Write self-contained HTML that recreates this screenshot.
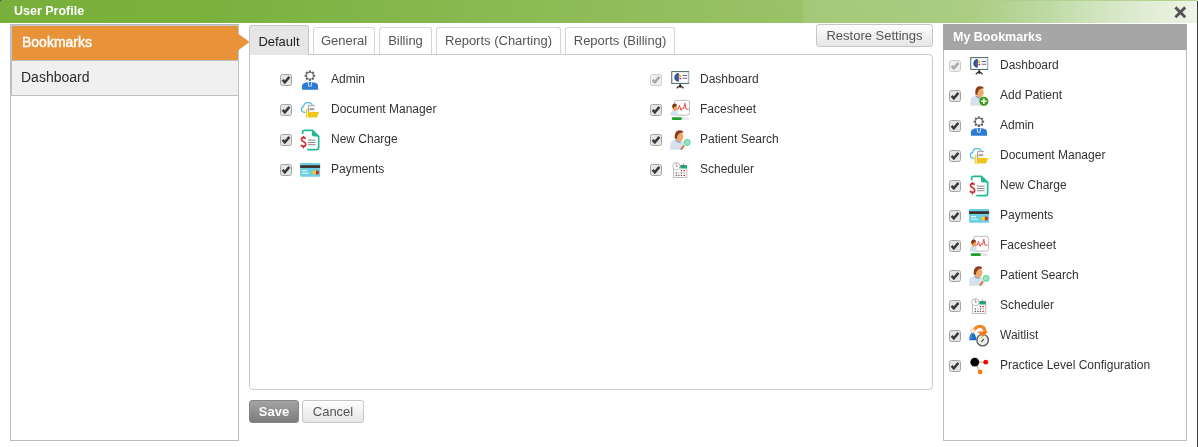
<!DOCTYPE html>
<html><head><meta charset="utf-8">
<style>
*{box-sizing:border-box;margin:0;padding:0}
html,body{width:1198px;height:447px;overflow:hidden;background:#fff;font-family:"Liberation Sans",sans-serif;color:#333}
.a{position:absolute}
#hdr{left:0;top:0;width:1197px;height:23px;background:linear-gradient(to right,#79b03b 0%,#7ab13d 17%,#9ac268 67.05%,#a2c978 67.05%,#aacd82 81%,#bcd9a0 87%,#d2e5c0 92%,#eef5e8 100%)}
#title{left:14px;top:4px;font-size:12.5px;font-weight:bold;color:#fff;line-height:14px}
#edge{left:1197px;top:1px;width:1px;height:446px;background:#3c3c3c}
#lp{left:10px;top:24px;width:229px;height:417px;border:1px solid #b8bcc0}
#bm{left:11px;top:25px;width:228px;height:36px;border:1px solid #c2c8ce;background:#e8923a;color:#fff;font-size:14px;font-weight:normal;-webkit-text-stroke:0.4px #fff;padding:8px 0 0 10px}
#dbi{left:11px;top:60px;width:228px;height:36px;background:#f0f0f0;border:1px solid #c0c0c0;font-size:14px;color:#2a2a2a;padding:8px 0 0 9px}
.tab{top:27px;height:27px;border:1px solid #d6d6d6;border-bottom:none;border-radius:3px 3px 0 0;background:#fff;font-size:13px;color:#555;text-align:center;padding-top:5px}
.tab.on{top:25px;height:30px;background:#e6e6e6;color:#222;border-color:#c8c8c8;padding-top:8px}
#box{left:249px;top:54px;width:684px;height:336px;border:1px solid #c8cccc;border-radius:0 4px 4px 4px}
.btn{border:1px solid #c6c6c6;border-radius:3px;background:linear-gradient(#fdfdfd,#e6e6e6);font-size:13px;color:#555;text-align:center}
.cb{width:12px;height:12px}
.it{font-size:12px;color:#333;line-height:14px;white-space:nowrap}
#rp{left:943px;top:24px;width:244px;height:417px;border:1px solid #b8bec2}
#rph{left:943px;top:24px;width:244px;height:26px;background:#a6a6a6;color:#fff;font-size:12.5px;font-weight:bold;padding:6px 0 0 10px}
svg{display:block}
</style></head><body>
<div id="wrap" style="position:absolute;left:0;top:0;width:1198px;height:447px;will-change:transform;background:#fff">
<div class="a" style="left:0;top:0;width:3px;height:3px;background:#555"></div>
<div class="a" id="hdr" style="border-top-left-radius:3px"></div>
<div class="a" id="hdrtop" style="left:0;top:0;width:1197px;height:1px;background:linear-gradient(to right,rgba(160,200,120,0) 60%,rgba(170,205,130,0.9) 100%)"></div>
<div class="a" id="title">User Profile</div>
<svg class="a" style="left:1174px;top:6px" width="13" height="13" viewBox="0 0 13 13"><path d="M1.4 1.4L11.2 11.2M11.2 1.4L1.4 11.2" stroke="#555" stroke-width="2.9"/></svg>
<div class="a" id="edge"></div>

<div class="a" id="lp"></div>
<div class="a" id="bm">Bookmarks</div>
<div class="a" id="dbi">Dashboard</div>
<svg class="a" style="left:238px;top:33px" width="12" height="18" viewBox="0 0 12 18"><path d="M0 0.5L11.5 9L0 17.5Z" fill="#e8923a"/></svg>

<div class="a" id="box"></div>
<div class="a tab on" style="left:249px;width:60px">Default</div>
<div class="a tab" style="left:313px;width:62px">General</div>
<div class="a tab" style="left:379px;width:53px">Billing</div>
<div class="a tab" style="left:436px;width:125px">Reports (Charting)</div>
<div class="a tab" style="left:565px;width:110px">Reports (Billing)</div>
<div class="a btn" style="left:816px;top:24px;width:117px;height:23px;padding-top:3px">Restore Settings</div>

<svg class="a" style="left:280px;top:74px" width="12" height="12" viewBox="0 0 12 12"><rect x="0.5" y="0.5" width="11" height="11" rx="2" fill="#e6e6e6" stroke="#a4a4a4"/><path d="M2.6 5.9L4.8 8.3L9.4 2.9" fill="none" stroke="#3a3a3a" stroke-width="2.5"/></svg>
<svg class="a" style="left:296px;top:66px" width="28" height="28" viewBox="0 0 447 447">
<g transform="translate(222 155)">
<circle r="60" fill="#646464"/>
<g fill="#646464">
<rect x="-17" y="-84" width="34" height="40"/><rect x="-17" y="44" width="34" height="40"/>
<rect x="-84" y="-17" width="40" height="34"/><rect x="44" y="-17" width="40" height="34"/>
<rect x="-17" y="-84" width="34" height="40" transform="rotate(45)"/><rect x="-17" y="44" width="34" height="40" transform="rotate(45)"/>
<rect x="-84" y="-17" width="40" height="34" transform="rotate(45)"/><rect x="44" y="-17" width="40" height="34" transform="rotate(45)"/>
</g>
<circle r="46" fill="#fff"/>
</g>
<path d="M95 380 L95 322 Q95 282 140 268 L188 255 L258 255 L305 268 Q352 282 352 322 L352 380Z" fill="#2e7bd6"/>
<path d="M190 250 L210 335 M255 250 L235 335" stroke="#fff" stroke-width="14"/>
</svg>
<div class="a it" style="left:331px;top:72px">Admin</div>
<svg class="a" style="left:280px;top:104px" width="12" height="12" viewBox="0 0 12 12"><rect x="0.5" y="0.5" width="11" height="11" rx="2" fill="#e6e6e6" stroke="#a4a4a4"/><path d="M2.6 5.9L4.8 8.3L9.4 2.9" fill="none" stroke="#3a3a3a" stroke-width="2.5"/></svg>
<svg class="a" style="left:296px;top:96px" width="28" height="28" viewBox="0 0 447 447">
<path d="M150 262 Q88 262 86 215 Q85 172 122 168 Q130 106 186 104 Q236 104 262 140" fill="none" stroke="#39b4d6" stroke-width="18"/>
<rect x="158" y="205" width="42" height="140" fill="#f2cc2c"/>
<rect x="176" y="218" width="9" height="115" fill="#fff"/>
<rect x="196" y="147" width="108" height="163" fill="#f2f2f2"/>
<path d="M200 310 L200 151 L304 151" fill="none" stroke="#8c8c8c" stroke-width="12"/>
<rect x="215" y="195" width="72" height="30" fill="#a0a0a0"/>
<path d="M196 345 L196 255 L370 255 L335 345Z" fill="#f0c61e"/>
</svg>
<div class="a it" style="left:331px;top:102px">Document Manager</div>
<svg class="a" style="left:280px;top:134px" width="12" height="12" viewBox="0 0 12 12"><rect x="0.5" y="0.5" width="11" height="11" rx="2" fill="#e6e6e6" stroke="#a4a4a4"/><path d="M2.6 5.9L4.8 8.3L9.4 2.9" fill="none" stroke="#3a3a3a" stroke-width="2.5"/></svg>
<svg class="a" style="left:296px;top:126px" width="28" height="28" viewBox="0 0 447 447">
<path d="M105 130 L105 105 Q105 70 140 70 L262 70 L362 165 L362 345 Q362 378 330 378 L180 378" fill="none" stroke="#22b893" stroke-width="26"/>
<path d="M255 72 L255 140 Q255 168 285 168 L360 168 Z" fill="#22b893"/>
<rect x="190" y="218" width="122" height="14" fill="#777"/>
<rect x="190" y="255" width="122" height="14" fill="#777"/>
<rect x="190" y="292" width="122" height="14" fill="#777"/>
<path d="M152 205 Q145 185 120 185 Q88 185 88 215 Q88 240 122 250 Q155 260 155 290 Q155 325 118 325 Q88 325 80 298" fill="none" stroke="#d42a2f" stroke-width="26"/>
<path d="M120 158 L120 195 M120 315 L120 360" stroke="#d42a2f" stroke-width="22"/>
</svg>
<div class="a it" style="left:331px;top:132px">New Charge</div>
<svg class="a" style="left:280px;top:164px" width="12" height="12" viewBox="0 0 12 12"><rect x="0.5" y="0.5" width="11" height="11" rx="2" fill="#e6e6e6" stroke="#a4a4a4"/><path d="M2.6 5.9L4.8 8.3L9.4 2.9" fill="none" stroke="#3a3a3a" stroke-width="2.5"/></svg>
<svg class="a" style="left:296px;top:156px" width="28" height="28" viewBox="0 0 447 447">
<rect x="65" y="110" width="320" height="222" rx="22" fill="#6ccfe0"/>
<rect x="65" y="148" width="320" height="42" fill="#3b2b28"/>
<rect x="95" y="225" width="80" height="18" fill="#e9fafd"/>
<rect x="95" y="266" width="110" height="16" fill="#e9fafd"/>
<circle cx="335" cy="265" r="32" fill="#d81e2a"/>
<circle cx="292" cy="265" r="32" fill="#f2d21e"/>
</svg>
<div class="a it" style="left:331px;top:162px">Payments</div>
<svg class="a" style="left:650px;top:74px" width="12" height="12" viewBox="0 0 12 12"><rect x="0.5" y="0.5" width="11" height="11" rx="2" fill="#f0f0f0" stroke="#cccccc"/><path d="M2.6 5.9L4.8 8.3L9.4 2.9" fill="none" stroke="#a9a9a9" stroke-width="2.5"/></svg>
<svg class="a" style="left:666px;top:66px" width="28" height="28" viewBox="0 0 447 447">
<rect x="92" y="90" width="270" height="188" fill="#fff" stroke="#3d5c5a" stroke-width="15"/>
<rect x="348" y="96" width="20" height="176" fill="#a9bcbc"/>
<path d="M203 112 A70 70 0 0 0 203 252 Z" fill="#2c4a90"/>
<path d="M203 140 A42 42 0 0 0 203 224 Z" fill="#3a5fa8"/>
<path d="M210 122 L210 174 L246 174 A52 52 0 0 0 210 122Z" fill="#f2b81c"/>
<path d="M210 186 L246 186 A40 40 0 0 1 222 218 Z" fill="#e02a3a"/>
<rect x="265" y="144" width="72" height="14" fill="#5a4b8c"/>
<rect x="265" y="188" width="72" height="14" fill="#5a4b8c"/>
<path d="M226 282 L226 350 M226 305 L172 355 M226 305 L280 355" stroke="#3a2a22" stroke-width="20" fill="none"/>
</svg>
<div class="a it" style="left:700px;top:72px">Dashboard</div>
<svg class="a" style="left:650px;top:104px" width="12" height="12" viewBox="0 0 12 12"><rect x="0.5" y="0.5" width="11" height="11" rx="2" fill="#e6e6e6" stroke="#a4a4a4"/><path d="M2.6 5.9L4.8 8.3L9.4 2.9" fill="none" stroke="#3a3a3a" stroke-width="2.5"/></svg>
<svg class="a" style="left:666px;top:96px" width="28" height="28" viewBox="0 0 447 447">
<rect x="135" y="70" width="240" height="235" rx="28" fill="#fff" stroke="#a8a8a8" stroke-width="12"/>
<path d="M170 210 L195 210 L215 150 L240 230 L262 190 L282 200 L300 115 L320 210 L362 210" fill="none" stroke="#e83030" stroke-width="14"/>
<path d="M68 310 Q70 235 125 225 L175 225 Q190 250 190 310Z" fill="#cfe0ee"/>
<ellipse cx="140" cy="185" rx="38" ry="52" fill="#f0a058"/>
<path d="M98 170 Q100 115 150 118 Q180 128 172 160 Q140 150 120 200 Z" fill="#7a3a18"/>
<rect x="92" y="338" width="270" height="44" rx="20" fill="#e6e6e6"/>
<rect x="92" y="338" width="160" height="44" rx="20" fill="#1aa22a"/>
</svg>
<div class="a it" style="left:700px;top:102px">Facesheet</div>
<svg class="a" style="left:650px;top:134px" width="12" height="12" viewBox="0 0 12 12"><rect x="0.5" y="0.5" width="11" height="11" rx="2" fill="#e6e6e6" stroke="#a4a4a4"/><path d="M2.6 5.9L4.8 8.3L9.4 2.9" fill="none" stroke="#3a3a3a" stroke-width="2.5"/></svg>
<svg class="a" style="left:666px;top:126px" width="28" height="28" viewBox="0 0 447 447">
<path d="M65 380 L68 300 Q75 235 150 220 L200 230 L260 240 Q285 260 290 330 L290 380Z" fill="#d5e2ee"/>
<path d="M145 222 Q175 270 230 268 L232 248 Q180 250 160 218Z" fill="#3e8ede"/>
<ellipse cx="215" cy="168" rx="60" ry="82" fill="#f0a968"/>
<path d="M140 200 Q130 90 195 70 Q265 60 282 100 L230 110 Q185 115 170 210Z" fill="#8a3c1c"/>
<path d="M235 375 L290 310" stroke="#e06a3a" stroke-width="28"/>
<circle cx="338" cy="262" r="48" fill="#9fe0c0" stroke="#3fcf8f" stroke-width="14"/>
</svg>
<div class="a it" style="left:700px;top:132px">Patient Search</div>
<svg class="a" style="left:650px;top:164px" width="12" height="12" viewBox="0 0 12 12"><rect x="0.5" y="0.5" width="11" height="11" rx="2" fill="#e6e6e6" stroke="#a4a4a4"/><path d="M2.6 5.9L4.8 8.3L9.4 2.9" fill="none" stroke="#3a3a3a" stroke-width="2.5"/></svg>
<svg class="a" style="left:666px;top:156px" width="28" height="28" viewBox="0 0 447 447">
<rect x="118" y="150" width="215" height="195" fill="#fff" stroke="#9a9a9a" stroke-width="10"/>
<rect x="228" y="145" width="105" height="55" fill="#1fa57a"/>
<path d="M278 118 L278 175" stroke="#c44" stroke-width="10"/>
<circle cx="165" cy="162" r="58" fill="#fff" stroke="#9a9a9a" stroke-width="10"/>
<path d="M165 115 L165 165 L190 165" stroke="#666" stroke-width="10" fill="none"/>
<g fill="#555">
<circle cx="245" cy="232" r="12"/>
<circle cx="165" cy="270" r="12"/><circle cx="205" cy="270" r="10" fill="#999"/><circle cx="245" cy="270" r="12"/>
<circle cx="165" cy="310" r="12"/><circle cx="205" cy="310" r="12"/><circle cx="245" cy="310" r="12"/>
</g>
<g fill="#ee4422">
<rect x="275" y="222" width="30" height="20"/><rect x="275" y="260" width="30" height="20" fill="#f4a08a"/><rect x="275" y="300" width="30" height="20"/>
</g>
</svg>
<div class="a it" style="left:700px;top:162px">Scheduler</div>
<svg class="a" style="left:949px;top:60px" width="12" height="12" viewBox="0 0 12 12"><rect x="0.5" y="0.5" width="11" height="11" rx="2" fill="#f0f0f0" stroke="#cccccc"/><path d="M2.6 5.9L4.8 8.3L9.4 2.9" fill="none" stroke="#a9a9a9" stroke-width="2.5"/></svg>
<svg class="a" style="left:965px;top:52px" width="28" height="28" viewBox="0 0 447 447">
<rect x="92" y="90" width="270" height="188" fill="#fff" stroke="#3d5c5a" stroke-width="15"/>
<rect x="348" y="96" width="20" height="176" fill="#a9bcbc"/>
<path d="M203 112 A70 70 0 0 0 203 252 Z" fill="#2c4a90"/>
<path d="M203 140 A42 42 0 0 0 203 224 Z" fill="#3a5fa8"/>
<path d="M210 122 L210 174 L246 174 A52 52 0 0 0 210 122Z" fill="#f2b81c"/>
<path d="M210 186 L246 186 A40 40 0 0 1 222 218 Z" fill="#e02a3a"/>
<rect x="265" y="144" width="72" height="14" fill="#5a4b8c"/>
<rect x="265" y="188" width="72" height="14" fill="#5a4b8c"/>
<path d="M226 282 L226 350 M226 305 L172 355 M226 305 L280 355" stroke="#3a2a22" stroke-width="20" fill="none"/>
</svg>
<div class="a it" style="left:1000px;top:58px">Dashboard</div>
<svg class="a" style="left:949px;top:90px" width="12" height="12" viewBox="0 0 12 12"><rect x="0.5" y="0.5" width="11" height="11" rx="2" fill="#e6e6e6" stroke="#a4a4a4"/><path d="M2.6 5.9L4.8 8.3L9.4 2.9" fill="none" stroke="#3a3a3a" stroke-width="2.5"/></svg>
<svg class="a" style="left:965px;top:82px" width="28" height="28" viewBox="0 0 447 447">
<g transform="translate(16 -32)">
<path d="M65 410 L70 330 Q78 265 150 250 L200 262 L255 272 Q290 300 300 380 L300 410Z" fill="#d5e2ee"/>
<path d="M150 252 Q178 300 232 298 L234 278 Q182 280 165 250Z" fill="#3e8ede"/>
<ellipse cx="222" cy="200" rx="60" ry="82" fill="#f0a968"/>
<path d="M148 232 Q138 120 203 100 Q272 92 290 130 L238 140 Q192 145 178 240Z" fill="#8a3c1c"/>
<circle cx="285" cy="340" r="72" fill="#3a9a1a"/>
<path d="M240 340 L330 340 M285 295 L285 385" stroke="#f4fff0" stroke-width="26"/>
</g>
</svg>
<div class="a it" style="left:1000px;top:88px">Add Patient</div>
<svg class="a" style="left:949px;top:120px" width="12" height="12" viewBox="0 0 12 12"><rect x="0.5" y="0.5" width="11" height="11" rx="2" fill="#e6e6e6" stroke="#a4a4a4"/><path d="M2.6 5.9L4.8 8.3L9.4 2.9" fill="none" stroke="#3a3a3a" stroke-width="2.5"/></svg>
<svg class="a" style="left:965px;top:112px" width="28" height="28" viewBox="0 0 447 447">
<g transform="translate(222 155)">
<circle r="60" fill="#646464"/>
<g fill="#646464">
<rect x="-17" y="-84" width="34" height="40"/><rect x="-17" y="44" width="34" height="40"/>
<rect x="-84" y="-17" width="40" height="34"/><rect x="44" y="-17" width="40" height="34"/>
<rect x="-17" y="-84" width="34" height="40" transform="rotate(45)"/><rect x="-17" y="44" width="34" height="40" transform="rotate(45)"/>
<rect x="-84" y="-17" width="40" height="34" transform="rotate(45)"/><rect x="44" y="-17" width="40" height="34" transform="rotate(45)"/>
</g>
<circle r="46" fill="#fff"/>
</g>
<path d="M95 380 L95 322 Q95 282 140 268 L188 255 L258 255 L305 268 Q352 282 352 322 L352 380Z" fill="#2e7bd6"/>
<path d="M190 250 L210 335 M255 250 L235 335" stroke="#fff" stroke-width="14"/>
</svg>
<div class="a it" style="left:1000px;top:118px">Admin</div>
<svg class="a" style="left:949px;top:150px" width="12" height="12" viewBox="0 0 12 12"><rect x="0.5" y="0.5" width="11" height="11" rx="2" fill="#e6e6e6" stroke="#a4a4a4"/><path d="M2.6 5.9L4.8 8.3L9.4 2.9" fill="none" stroke="#3a3a3a" stroke-width="2.5"/></svg>
<svg class="a" style="left:965px;top:142px" width="28" height="28" viewBox="0 0 447 447">
<path d="M150 262 Q88 262 86 215 Q85 172 122 168 Q130 106 186 104 Q236 104 262 140" fill="none" stroke="#39b4d6" stroke-width="18"/>
<rect x="158" y="205" width="42" height="140" fill="#f2cc2c"/>
<rect x="176" y="218" width="9" height="115" fill="#fff"/>
<rect x="196" y="147" width="108" height="163" fill="#f2f2f2"/>
<path d="M200 310 L200 151 L304 151" fill="none" stroke="#8c8c8c" stroke-width="12"/>
<rect x="215" y="195" width="72" height="30" fill="#a0a0a0"/>
<path d="M196 345 L196 255 L370 255 L335 345Z" fill="#f0c61e"/>
</svg>
<div class="a it" style="left:1000px;top:148px">Document Manager</div>
<svg class="a" style="left:949px;top:180px" width="12" height="12" viewBox="0 0 12 12"><rect x="0.5" y="0.5" width="11" height="11" rx="2" fill="#e6e6e6" stroke="#a4a4a4"/><path d="M2.6 5.9L4.8 8.3L9.4 2.9" fill="none" stroke="#3a3a3a" stroke-width="2.5"/></svg>
<svg class="a" style="left:965px;top:172px" width="28" height="28" viewBox="0 0 447 447">
<path d="M105 130 L105 105 Q105 70 140 70 L262 70 L362 165 L362 345 Q362 378 330 378 L180 378" fill="none" stroke="#22b893" stroke-width="26"/>
<path d="M255 72 L255 140 Q255 168 285 168 L360 168 Z" fill="#22b893"/>
<rect x="190" y="218" width="122" height="14" fill="#777"/>
<rect x="190" y="255" width="122" height="14" fill="#777"/>
<rect x="190" y="292" width="122" height="14" fill="#777"/>
<path d="M152 205 Q145 185 120 185 Q88 185 88 215 Q88 240 122 250 Q155 260 155 290 Q155 325 118 325 Q88 325 80 298" fill="none" stroke="#d42a2f" stroke-width="26"/>
<path d="M120 158 L120 195 M120 315 L120 360" stroke="#d42a2f" stroke-width="22"/>
</svg>
<div class="a it" style="left:1000px;top:178px">New Charge</div>
<svg class="a" style="left:949px;top:210px" width="12" height="12" viewBox="0 0 12 12"><rect x="0.5" y="0.5" width="11" height="11" rx="2" fill="#e6e6e6" stroke="#a4a4a4"/><path d="M2.6 5.9L4.8 8.3L9.4 2.9" fill="none" stroke="#3a3a3a" stroke-width="2.5"/></svg>
<svg class="a" style="left:965px;top:202px" width="28" height="28" viewBox="0 0 447 447">
<rect x="65" y="110" width="320" height="222" rx="22" fill="#6ccfe0"/>
<rect x="65" y="148" width="320" height="42" fill="#3b2b28"/>
<rect x="95" y="225" width="80" height="18" fill="#e9fafd"/>
<rect x="95" y="266" width="110" height="16" fill="#e9fafd"/>
<circle cx="335" cy="265" r="32" fill="#d81e2a"/>
<circle cx="292" cy="265" r="32" fill="#f2d21e"/>
</svg>
<div class="a it" style="left:1000px;top:208px">Payments</div>
<svg class="a" style="left:949px;top:240px" width="12" height="12" viewBox="0 0 12 12"><rect x="0.5" y="0.5" width="11" height="11" rx="2" fill="#e6e6e6" stroke="#a4a4a4"/><path d="M2.6 5.9L4.8 8.3L9.4 2.9" fill="none" stroke="#3a3a3a" stroke-width="2.5"/></svg>
<svg class="a" style="left:965px;top:232px" width="28" height="28" viewBox="0 0 447 447">
<rect x="135" y="70" width="240" height="235" rx="28" fill="#fff" stroke="#a8a8a8" stroke-width="12"/>
<path d="M170 210 L195 210 L215 150 L240 230 L262 190 L282 200 L300 115 L320 210 L362 210" fill="none" stroke="#e83030" stroke-width="14"/>
<path d="M68 310 Q70 235 125 225 L175 225 Q190 250 190 310Z" fill="#cfe0ee"/>
<ellipse cx="140" cy="185" rx="38" ry="52" fill="#f0a058"/>
<path d="M98 170 Q100 115 150 118 Q180 128 172 160 Q140 150 120 200 Z" fill="#7a3a18"/>
<rect x="92" y="338" width="270" height="44" rx="20" fill="#e6e6e6"/>
<rect x="92" y="338" width="160" height="44" rx="20" fill="#1aa22a"/>
</svg>
<div class="a it" style="left:1000px;top:238px">Facesheet</div>
<svg class="a" style="left:949px;top:270px" width="12" height="12" viewBox="0 0 12 12"><rect x="0.5" y="0.5" width="11" height="11" rx="2" fill="#e6e6e6" stroke="#a4a4a4"/><path d="M2.6 5.9L4.8 8.3L9.4 2.9" fill="none" stroke="#3a3a3a" stroke-width="2.5"/></svg>
<svg class="a" style="left:965px;top:262px" width="28" height="28" viewBox="0 0 447 447">
<path d="M65 380 L68 300 Q75 235 150 220 L200 230 L260 240 Q285 260 290 330 L290 380Z" fill="#d5e2ee"/>
<path d="M145 222 Q175 270 230 268 L232 248 Q180 250 160 218Z" fill="#3e8ede"/>
<ellipse cx="215" cy="168" rx="60" ry="82" fill="#f0a968"/>
<path d="M140 200 Q130 90 195 70 Q265 60 282 100 L230 110 Q185 115 170 210Z" fill="#8a3c1c"/>
<path d="M235 375 L290 310" stroke="#e06a3a" stroke-width="28"/>
<circle cx="338" cy="262" r="48" fill="#9fe0c0" stroke="#3fcf8f" stroke-width="14"/>
</svg>
<div class="a it" style="left:1000px;top:268px">Patient Search</div>
<svg class="a" style="left:949px;top:300px" width="12" height="12" viewBox="0 0 12 12"><rect x="0.5" y="0.5" width="11" height="11" rx="2" fill="#e6e6e6" stroke="#a4a4a4"/><path d="M2.6 5.9L4.8 8.3L9.4 2.9" fill="none" stroke="#3a3a3a" stroke-width="2.5"/></svg>
<svg class="a" style="left:965px;top:292px" width="28" height="28" viewBox="0 0 447 447">
<rect x="118" y="150" width="215" height="195" fill="#fff" stroke="#9a9a9a" stroke-width="10"/>
<rect x="228" y="145" width="105" height="55" fill="#1fa57a"/>
<path d="M278 118 L278 175" stroke="#c44" stroke-width="10"/>
<circle cx="165" cy="162" r="58" fill="#fff" stroke="#9a9a9a" stroke-width="10"/>
<path d="M165 115 L165 165 L190 165" stroke="#666" stroke-width="10" fill="none"/>
<g fill="#555">
<circle cx="245" cy="232" r="12"/>
<circle cx="165" cy="270" r="12"/><circle cx="205" cy="270" r="10" fill="#999"/><circle cx="245" cy="270" r="12"/>
<circle cx="165" cy="310" r="12"/><circle cx="205" cy="310" r="12"/><circle cx="245" cy="310" r="12"/>
</g>
<g fill="#ee4422">
<rect x="275" y="222" width="30" height="20"/><rect x="275" y="260" width="30" height="20" fill="#f4a08a"/><rect x="275" y="300" width="30" height="20"/>
</g>
</svg>
<div class="a it" style="left:1000px;top:298px">Scheduler</div>
<svg class="a" style="left:949px;top:330px" width="12" height="12" viewBox="0 0 12 12"><rect x="0.5" y="0.5" width="11" height="11" rx="2" fill="#e6e6e6" stroke="#a4a4a4"/><path d="M2.6 5.9L4.8 8.3L9.4 2.9" fill="none" stroke="#3a3a3a" stroke-width="2.5"/></svg>
<svg class="a" style="left:965px;top:322px" width="28" height="28" viewBox="0 0 447 447">
<g transform="translate(16 -32)">
<path d="M52 322 Q52 212 106 207 Q162 212 162 322Z" fill="#1c6cc4"/>
<path d="M70 300 Q72 230 100 222 Q90 260 95 300Z" fill="#4a9ae8"/>
<circle cx="105" cy="175" r="30" fill="#fff" stroke="#e6b47a" stroke-width="12"/>
<circle cx="265" cy="322" r="92" fill="#ececec" stroke="#5e5e5e" stroke-width="22"/>
<path d="M232 262 L268 262 L262 292 L238 292Z" fill="#e8d040"/>
<path d="M245 350 L285 305" stroke="#333" stroke-width="16"/>
<path d="M135 150 Q185 85 255 108 Q305 128 300 190" fill="none" stroke="#f08a28" stroke-width="52"/>
<path d="M182 182 L355 182 L268 268Z" fill="#f07a18"/>
</g>
</svg>
<div class="a it" style="left:1000px;top:328px">Waitlist</div>
<svg class="a" style="left:949px;top:360px" width="12" height="12" viewBox="0 0 12 12"><rect x="0.5" y="0.5" width="11" height="11" rx="2" fill="#e6e6e6" stroke="#a4a4a4"/><path d="M2.6 5.9L4.8 8.3L9.4 2.9" fill="none" stroke="#3a3a3a" stroke-width="2.5"/></svg>
<svg class="a" style="left:965px;top:352px" width="28" height="28" viewBox="0 0 447 447">
<g transform="translate(16 -32)">
<path d="M140 195 L315 195 M140 195 L225 350" stroke="#a06040" stroke-width="10"/>
<circle cx="140" cy="195" r="70" fill="#000"/>
<circle cx="315" cy="195" r="38" fill="#f40000"/>
<circle cx="225" cy="350" r="38" fill="#ff7a10"/>
</g>
</svg>
<div class="a it" style="left:1000px;top:358px">Practice Level Configuration</div>

<div class="a" style="left:249px;top:400px;width:50px;height:23px;border:1px solid #858585;border-radius:3px;background:linear-gradient(#a4a4a4,#7c7c7c);color:#fff;font-weight:bold;font-size:13px;text-align:center;padding-top:3px">Save</div>
<div class="a btn" style="left:302px;top:400px;width:62px;height:23px;padding-top:3px;font-size:13px">Cancel</div>

<div class="a" id="rp"></div>
<div class="a" id="rph">My Bookmarks</div>

</div>
</body></html>
